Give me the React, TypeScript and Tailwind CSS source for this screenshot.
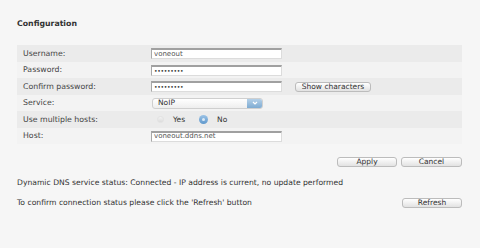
import React from 'react';

const font = { fontFamily: '"DejaVu Sans", Verdana, sans-serif' };

function TextField({ value }: { value: string }) {
    return (
        <div className="flex h-[11px] w-[131px] items-center border border-t-2 border-t-[#a0a0a0] border-l-[#a8a8a8] border-r-[#dcdcdc] border-b-[#dcdcdc] bg-white pl-[2px] text-[7px] leading-none text-[#555]">
            {value}
        </div>
    );
}

function PasswordField() {
    return (
        <div className="flex h-[11px] w-[131px] items-center border border-t-2 border-t-[#a0a0a0] border-l-[#a8a8a8] border-r-[#dcdcdc] border-b-[#dcdcdc] bg-white pl-[2px] text-[6px] leading-none tracking-[-0.3px] text-[#333]">
            •••••••••
        </div>
    );
}

function Button({ label, width }: { label: string; width: string }) {
    return (
        <button
            className={`${width} flex h-[10px] items-center justify-center rounded-[3px] border border-[#bcbcbc] bg-gradient-to-b from-white to-[#e2e2e2] text-[7.5px] leading-none text-[#333]`}
        >
            {label}
        </button>
    );
}

function Row({ label, dark, h, children }: { label: string; dark: boolean; h: string; children: React.ReactNode }) {
    return (
        <div className={`flex ${h} items-center ${dark ? 'bg-[#ebebeb]' : 'bg-[#f3f3f3]'}`}>
            <div className="w-[134px] pl-[6px] text-[7.8px] leading-none text-[#444]">{label}</div>
            {children}
        </div>
    );
}

export default function App() {
    return (
        <div className="h-[248px] w-[480px] bg-[#f6f6f6] px-[17px] pt-[20px]" style={font}>
            <h2 className="h-[25px] text-[7.8px] font-bold leading-none text-[#333]">Configuration</h2>

            <div className="w-[445px]">
                <Row label="Username:" dark h="h-[17px]">
                    <TextField value="voneout" />
                </Row>
                <Row label="Password:" dark={false} h="h-[16px]">
                    <PasswordField />
                </Row>
                <Row label="Confirm password:" dark h="h-[17px]">
                    <PasswordField />
                    <div className="ml-[13px]">
                        <Button label="Show characters" width="w-[76px]" />
                    </div>
                </Row>
                <Row label="Service:" dark={false} h="h-[16px]">
                    <div className="ml-[1px] flex h-[11px] w-[111px] items-stretch overflow-hidden rounded-[3px] border border-[#cfcfcf] bg-gradient-to-b from-white to-[#eeeeee]">
                        <div className="flex flex-1 items-center pl-[5px] text-[7.5px] leading-none text-[#333]">NoIP</div>
                        <div className="flex w-[15px] items-center justify-center bg-gradient-to-b from-[#b4d0e8] to-[#7eabd2]">
                            <svg width="6" height="4" viewBox="0 0 6 4">
                                <path d="M1 1 L3 3 L5 1" stroke="#fff" strokeWidth="1.2" fill="none" />
                            </svg>
                        </div>
                    </div>
                </Row>
                <Row label="Use multiple hosts:" dark h="h-[17px]">
                    <div className="ml-[6px] flex items-center text-[7.5px] leading-none text-[#333]">
                        <span className="h-[7px] w-[7px] rounded-full border border-[#e2e2e2] bg-gradient-to-b from-[#f2f2f2] to-[#dcdcdc]" />
                        <span className="ml-[9px]">Yes</span>
                        <span className="ml-[14px] flex h-[9px] w-[9px] items-center justify-center rounded-full bg-gradient-to-b from-[#9cc3e6] to-[#5f98cc]">
                            <span className="h-[3px] w-[3px] rounded-full bg-[#dceaf6]" />
                        </span>
                        <span className="ml-[9px]">No</span>
                    </div>
                </Row>
                <Row label="Host:" dark={false} h="h-[16px]">
                    <TextField value="voneout.ddns.net" />
                </Row>
            </div>

            <div className="mt-[13px] flex w-[445px] justify-end gap-[4px]">
                <Button label="Apply" width="w-[60px]" />
                <Button label="Cancel" width="w-[61px]" />
            </div>

            <p className="mt-[12px] text-[7.65px] leading-none text-[#333]">
                Dynamic DNS service status: Connected - IP address is current, no update performed
            </p>

            <div className="mt-[11px] flex w-[445px] items-center justify-between">
                <p className="text-[7.65px] leading-none text-[#333]">
                    To confirm connection status please click the 'Refresh' button
                </p>
                <Button label="Refresh" width="w-[60px]" />
            </div>
        </div>
    );
}
